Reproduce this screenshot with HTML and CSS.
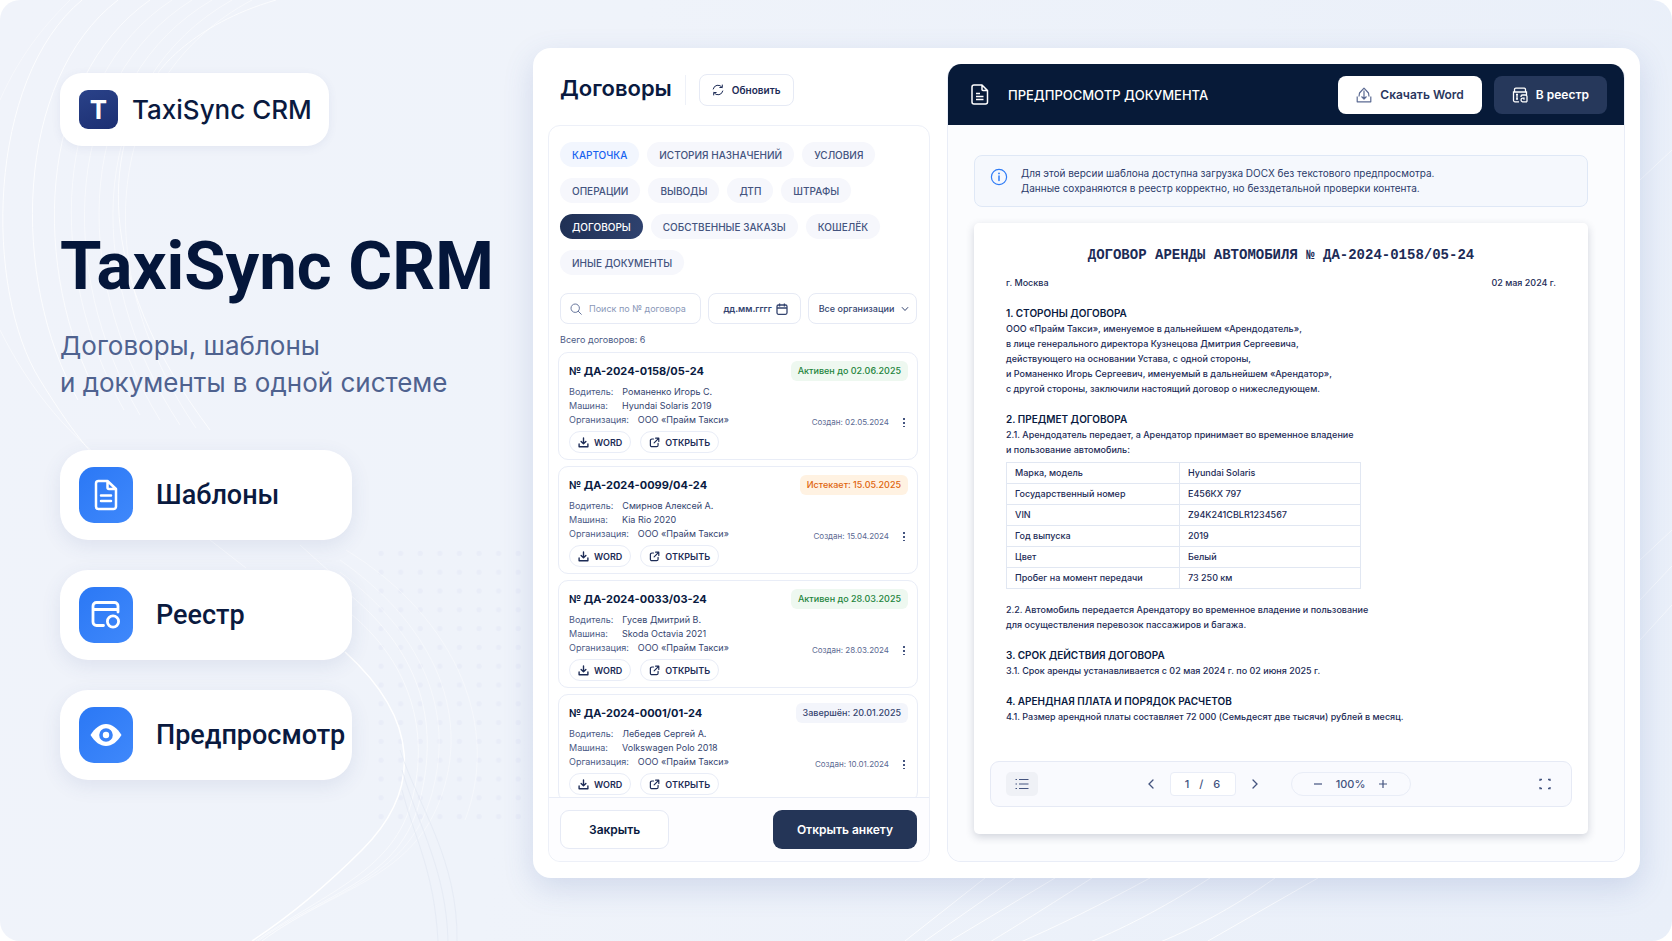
FILE: index.html
```
<!DOCTYPE html>
<html lang="ru">
<head>
    <meta charset="UTF-8">
    <meta name="viewport" content="width=device-width, initial-scale=1.0">
    <title>TaxiSync CRM</title>
    <link rel="stylesheet" href="styles.css">
</head>
<body>
    <!-- Иконки -->
    <svg class="sprite" aria-hidden="true">
        <symbol id="i-download" viewBox="0 0 12 12">
            <path d="M6 1v6M3.4 4.8 6 7.3l2.6-2.5M1.2 7.5V10.6h9.6V7.5" fill="none" stroke="currentColor" stroke-width="1.5" stroke-linecap="round" stroke-linejoin="round"/>
        </symbol>
        <symbol id="i-open" viewBox="0 0 12 12">
            <path d="M5 2.2H3.2a1.7 1.7 0 0 0-1.7 1.7v5a1.7 1.7 0 0 0 1.7 1.7h5A1.7 1.7 0 0 0 9.9 8.9V7M7.2 1.3h3.5v3.5M10.5 1.5 5.6 6.4" fill="none" stroke="currentColor" stroke-width="1.3" stroke-linecap="round" stroke-linejoin="round"/>
        </symbol>
    </svg>

    <div class="page">
        <svg class="backdrop" viewBox="0 0 1672 941" preserveAspectRatio="none" aria-hidden="true">
            <defs>
                <pattern id="dots" x="371" y="544" width="19.6" height="18.8" patternUnits="userSpaceOnUse">
                    <circle cx="10" cy="9.4" r="2.6" fill="#e8ecf7"/>
                </pattern>
            </defs>
            <rect x="371" y="544" width="160" height="282" fill="url(#dots)" opacity=".8"/>
            <g fill="none" stroke="#fff">
                <path d="M82 0C-14 80-16 290 40 380S110 470 150 500" opacity=".8"/>
                <path d="M0 100C22 50 50 20 70 0" opacity=".4"/>
                <path d="M118 0C14 80 10 280 78 400" opacity=".8"/>
                <path d="M150 0C36 80 30 270 100 400" opacity=".7"/>
                <path d="M172 0C50 80 45 270 124 410" opacity=".5"/>
                <path d="M192 0C64 80 55 270 140 415" opacity=".5"/>
                <path d="M212 0C76 80 68 270 160 420" opacity=".5"/>
                <path d="M232 0C90 80 78 270 180 425" opacity=".5"/>
                <path d="M252 0C102 80 88 270 196 428" opacity=".5"/>
                <path d="M276 0C190 25 158 73 158 73C105 140 90 270 210 430" opacity=".7"/>
                <path d="M0 330C30 390 70 440 130 480" opacity=".5"/>
                <path d="M345 652C420 720 422 790 362 850C324 888 290 916 252 941" stroke-width="1.5"/>
                <path d="M340 560C440 630 470 720 440 800S330 890 262 941" opacity=".4"/>
                <path d="M340 572C430 640 455 720 430 800S330 890 262 941" opacity=".4"/>
                <path d="M344 590C420 650 440 720 420 800S330 890 258 941" opacity=".5"/>
                <path d="M346 610C410 660 430 730 412 800S330 890 256 941" opacity=".5"/>
                <path d="M346 550C460 620 500 730 465 820" opacity=".4"/>
                <path d="M210 540 246 568M300 545 350 590" opacity=".5"/>
                <path d="M985 878 905 941M1015 878 925 941M1055 878 950 941M1092 878C1050 905 1010 930 985 945M1150 878C1100 905 1060 925 1014 945M1210 878C1160 910 1120 930 1083 945M1275 878C1230 910 1190 930 1153 945M1318 878 1208 941" opacity=".8"/>
                <path d="M1640 180 1672 150M1640 560 1672 530M1640 600 1672 566M1640 640 1672 605" opacity=".5"/>
            </g>
            <g fill="none" stroke="#e3e9f4" opacity=".7">
                <path d="M400 750C420 810 458 860 457 941"/>
                <path d="M402 770C420 830 446 870 448 941"/>
                <path d="M402 790C415 840 434 870 438 941"/>
            </g>
        </svg>

        <section class="hero">
            <div class="brand">
                <span class="brand-mark">T</span>
                <span class="brand-name">TaxiSync CRM</span>
            </div>
            <h1>TaxiSync CRM</h1>
            <p class="lead">Договоры, шаблоны<br>и документы в одной системе</p>
            <ul class="features">
                <li class="feature">
                    <span class="feature-icon">
                        <svg viewBox="0 0 32 32" width="32" height="32"><path d="M8.500 2h9L26 10v17.500a2.500 2.500 0 0 1-2.500 2.500h-15A2.500 2.500 0 0 1 6 27.500v-23A2.500 2.500 0 0 1 8.500 2M17.500 2v6.500A1.500 1.500 0 0 0 19 10h7M11 16.500h10M11 22h10" fill="none" stroke="#fff" stroke-width="2.5" stroke-linecap="round" stroke-linejoin="round"/></svg>
                    </span>
                    Шаблоны
                </li>
                <li class="feature">
                    <span class="feature-icon">
                        <svg viewBox="0 0 32 32" width="32" height="32"><path d="M13.500 26.500H6.500a3.500 3.500 0 0 1-3.500-3.500V7a3.500 3.500 0 0 1 3.500-3.500h18A3.500 3.500 0 0 1 28 7v6M3 10.500h25" fill="none" stroke="#fff" stroke-width="2.8" stroke-linecap="round"/><circle cx="23" cy="22.5" r="5.6" fill="none" stroke="#fff" stroke-width="2.8"/></svg>
                    </span>
                    Реестр
                </li>
                <li class="feature">
                    <span class="feature-icon">
                        <svg viewBox="0 0 32 32" width="32" height="32"><path d="M.5 16C5 9 10 5 16 5s11 4 15.500 11C27 23 22 27 16 27S5 23 .5 16Z" fill="#fff"/><circle cx="16" cy="16" r="5" fill="#fff" stroke="#3a82f8" stroke-width="3.6"/></svg>
                    </span>
                    Предпросмотр
                </li>
            </ul>
        </section>

        <main class="app">
            <section class="contracts">
                <header class="contracts-head">
                    <h2>Договоры</h2>
                    <button type="button" class="btn-refresh">
                        <svg viewBox="0 0 12 12" width="12" height="12"><path d="M1.2 5A4.900 4.900 0 0 1 10 3.300M10.800 7A4.900 4.900 0 0 1 2 8.700M10.300 1v2.500H7.800M1.700 11V8.500h2.500" fill="none" stroke="currentColor" stroke-linecap="round" stroke-linejoin="round"/></svg>
                        Обновить
                    </button>
                </header>

                <div class="card-panel">
                    <nav class="tabs">
                        <button type="button" class="tab tab-blue">КАРТОЧКА</button>
                        <button type="button" class="tab">ИСТОРИЯ НАЗНАЧЕНИЙ</button>
                        <button type="button" class="tab">УСЛОВИЯ</button>
                        <button type="button" class="tab">ОПЕРАЦИИ</button>
                        <button type="button" class="tab">ВЫВОДЫ</button>
                        <button type="button" class="tab">ДТП</button>
                        <button type="button" class="tab">ШТРАФЫ</button>
                        <button type="button" class="tab tab-active">ДОГОВОРЫ</button>
                        <button type="button" class="tab">СОБСТВЕННЫЕ ЗАКАЗЫ</button>
                        <button type="button" class="tab">КОШЕЛЁК</button>
                        <button type="button" class="tab">ИНЫЕ ДОКУМЕНТЫ</button>
                    </nav>

                    <form class="filters">
                        <label class="field field-search">
                            <svg viewBox="0 0 12 12" width="12" height="12"><circle cx="5.2" cy="5.2" r="4.2" fill="none" stroke="currentColor"/><path d="m8.300 8.300 3 3" stroke="currentColor" stroke-linecap="round"/></svg>
                            <input type="text" placeholder="Поиск по № договора" aria-label="Поиск по № договора">
                        </label>
                        <label class="field field-date">
                            <input type="text" placeholder="дд.мм.гггг" aria-label="Дата">
                            <svg viewBox="0 0 12 12" width="12" height="12"><rect x="1" y="2" width="10" height="9.3" rx="1.5" fill="none" stroke="currentColor" stroke-width="1.3"/><path d="M1 5h10M3.600.6v2.800M8.400.6v2.800" stroke="currentColor" stroke-width="1.3"/></svg>
                        </label>
                        <label class="field field-select">
                            <select aria-label="Организация">
                                <option>Все организации</option>
                            </select>
                            <svg viewBox="0 0 8 8" width="8" height="8"><path d="m1.200 2.500 2.800 3 2.800-3" fill="none" stroke="currentColor" stroke-linecap="round"/></svg>
                        </label>
                    </form>

                    <p class="total">Всего договоров: 6</p>

                    <div class="contract-list">
                        <article class="contract">
                            <div class="contract-top">
                                <h3>№ ДА-2024-0158/05-24</h3>
                                <span class="badge badge-green">Активен до 02.06.2025</span>
                            </div>
                            <div class="contract-info">
                                <dl>
                                    <div><dt>Водитель:</dt><dd>Романенко Игорь С.</dd></div>
                                    <div><dt>Машина:</dt><dd>Hyundai Solaris 2019</dd></div>
                                    <div><dt>Организация:</dt><dd>ООО «Прайм Такси»</dd></div>
                                </dl>
                                <span class="created">Создан: 02.05.2024</span>
                                <button type="button" class="more" aria-label="Ещё"></button>
                            </div>
                            <div class="contract-actions">
                                <button type="button" class="chip"><svg width="11" height="11"><use href="#i-download"/></svg>WORD</button>
                                <button type="button" class="chip"><svg width="11" height="11"><use href="#i-open"/></svg>ОТКРЫТЬ</button>
                            </div>
                        </article>

                        <article class="contract">
                            <div class="contract-top">
                                <h3>№ ДА-2024-0099/04-24</h3>
                                <span class="badge badge-orange">Истекает: 15.05.2025</span>
                            </div>
                            <div class="contract-info">
                                <dl>
                                    <div><dt>Водитель:</dt><dd>Смирнов Алексей А.</dd></div>
                                    <div><dt>Машина:</dt><dd>Kia Rio 2020</dd></div>
                                    <div><dt>Организация:</dt><dd>ООО «Прайм Такси»</dd></div>
                                </dl>
                                <span class="created">Создан: 15.04.2024</span>
                                <button type="button" class="more" aria-label="Ещё"></button>
                            </div>
                            <div class="contract-actions">
                                <button type="button" class="chip"><svg width="11" height="11"><use href="#i-download"/></svg>WORD</button>
                                <button type="button" class="chip"><svg width="11" height="11"><use href="#i-open"/></svg>ОТКРЫТЬ</button>
                            </div>
                        </article>

                        <article class="contract">
                            <div class="contract-top">
                                <h3>№ ДА-2024-0033/03-24</h3>
                                <span class="badge badge-green">Активен до 28.03.2025</span>
                            </div>
                            <div class="contract-info">
                                <dl>
                                    <div><dt>Водитель:</dt><dd>Гусев Дмитрий В.</dd></div>
                                    <div><dt>Машина:</dt><dd>Skoda Octavia 2021</dd></div>
                                    <div><dt>Организация:</dt><dd>ООО «Прайм Такси»</dd></div>
                                </dl>
                                <span class="created">Создан: 28.03.2024</span>
                                <button type="button" class="more" aria-label="Ещё"></button>
                            </div>
                            <div class="contract-actions">
                                <button type="button" class="chip"><svg width="11" height="11"><use href="#i-download"/></svg>WORD</button>
                                <button type="button" class="chip"><svg width="11" height="11"><use href="#i-open"/></svg>ОТКРЫТЬ</button>
                            </div>
                        </article>

                        <article class="contract">
                            <div class="contract-top">
                                <h3>№ ДА-2024-0001/01-24</h3>
                                <span class="badge badge-gray">Завершён: 20.01.2025</span>
                            </div>
                            <div class="contract-info">
                                <dl>
                                    <div><dt>Водитель:</dt><dd>Лебедев Сергей А.</dd></div>
                                    <div><dt>Машина:</dt><dd>Volkswagen Polo 2018</dd></div>
                                    <div><dt>Организация:</dt><dd>ООО «Прайм Такси»</dd></div>
                                </dl>
                                <span class="created">Создан: 10.01.2024</span>
                                <button type="button" class="more" aria-label="Ещё"></button>
                            </div>
                            <div class="contract-actions">
                                <button type="button" class="chip"><svg width="11" height="11"><use href="#i-download"/></svg>WORD</button>
                                <button type="button" class="chip"><svg width="11" height="11"><use href="#i-open"/></svg>ОТКРЫТЬ</button>
                            </div>
                        </article>
                    </div>

                    <footer class="card-footer">
                        <button type="button" class="btn btn-light">Закрыть</button>
                        <button type="button" class="btn btn-dark">Открыть анкету</button>
                    </footer>
                </div>
            </section>

            <section class="preview">
                <header class="preview-head">
                    <svg viewBox="0 0 18 21" width="18" height="21"><path d="M3 1h8l5.500 5.500V18a2 2 0 0 1-2 2H3a2 2 0 0 1-2-2V3a2 2 0 0 1 2-2ZM11 1v4.500a1 1 0 0 0 1 1h4.500" fill="none" stroke="#fff" stroke-width="1.5" stroke-linejoin="round"/><path d="M5 9.500h4M5 12.500h7.500M5 15.500h7.500" stroke="#fff" stroke-width="1.6"/></svg>
                    <h2>ПРЕДПРОСМОТР ДОКУМЕНТА</h2>
                    <button type="button" class="head-btn head-btn-white">
                        <svg viewBox="0 0 16 16" width="16" height="16"><path d="M1.200 9.500v5.300h13.600V9.500M8 12V3.500M5.500 9.500 8 12l2.500-2.500M3 9.500 3.500 6 8 1.200 12.500 6l.5 3.500" fill="none" stroke="#5b6a92" stroke-width="1.2" stroke-linejoin="round"/></svg>
                        Скачать Word
                    </button>
                    <button type="button" class="head-btn head-btn-dark">
                        <svg viewBox="0 0 16 16" width="16" height="16"><path d="M7 14.800H3a1.500 1.500 0 0 1-1.500-1.500V5h13v3M2.500 5V2.500A1.300 1.300 0 0 1 3.800 1.200h8.400a1.300 1.300 0 0 1 1.300 1.300V5M5 7.500v4.500M4 7.500h2M4 12h2" fill="none" stroke="#fff" stroke-width="1.3"/><path d="M15 14.800V9.500A1.500 1.500 0 0 0 13.500 8h-3A1.500 1.500 0 0 0 9 9.500v.5M15 14.800h-4.500A1.800 1.800 0 0 1 9 13c0-1 .8-1.800 1.800-1.800H12v1.600" fill="none" stroke="#fff" stroke-width="1.3"/></svg>
                        В реестр
                    </button>
                </header>

                <div class="preview-body">
                    <div class="notice">
                        <svg viewBox="0 0 18 18" width="18" height="18"><circle cx="9" cy="9" r="7.6" fill="none" stroke="#2f7cf6" stroke-width="1.2"/><path d="M9 8v4.500" stroke="#2f7cf6" stroke-width="1.5" stroke-linecap="round"/><circle cx="9" cy="5.4" r=".9" fill="#2f7cf6"/></svg>
                        <p>Для этой версии шаблона доступна загрузка DOCX без текстового предпросмотра.<br>Данные сохраняются в реестр корректно, но безздетальной проверки контента.</p>
                    </div>

                    <article class="doc">
                        <h3 class="doc-title">ДОГОВОР АРЕНДЫ АВТОМОБИЛЯ № ДА-2024-0158/05-24</h3>
                        <div class="doc-meta">
                            <span>г. Москва</span>
                            <span>02 мая 2024 г.</span>
                        </div>

                        <section>
                            <h4>1. СТОРОНЫ ДОГОВОРА</h4>
                            <p>ООО «Прайм Такси», именуемое в дальнейшем «Арендодатель»,<br>в лице генерального директора Кузнецова Дмитрия Сергеевича,<br>действующего на основании Устава, с одной стороны,<br>и Романенко Игорь Сергеевич, именуемый в дальнейшем «Арендатор»,<br>с другой стороны, заключили настоящий договор о нижеследующем.</p>
                        </section>

                        <section>
                            <h4>2. ПРЕДМЕТ ДОГОВОРА</h4>
                            <p>2.1. Арендодатель передает, а Арендатор принимает во временное владение<br>и пользование автомобиль:</p>
                            <table>
                                <tr><td>Марка, модель</td><td>Hyundai Solaris</td></tr>
                                <tr><td>Государственный номер</td><td>Е456КХ 797</td></tr>
                                <tr><td>VIN</td><td>Z94K241CBLR1234567</td></tr>
                                <tr><td>Год выпуска</td><td>2019</td></tr>
                                <tr><td>Цвет</td><td>Белый</td></tr>
                                <tr><td>Пробег на момент передачи</td><td>73 250 км</td></tr>
                            </table>
                            <p>2.2. Автомобиль передается Арендатору во временное владение и пользование<br>для осуществления перевозок пассажиров и багажа.</p>
                        </section>

                        <section>
                            <h4>3. СРОК ДЕЙСТВИЯ ДОГОВОРА</h4>
                            <p>3.1. Срок аренды устанавливается с 02 мая 2024 г. по 02 июня 2025 г.</p>
                        </section>

                        <section>
                            <h4>4. АРЕНДНАЯ ПЛАТА И ПОРЯДОК РАСЧЕТОВ</h4>
                            <p>4.1. Размер арендной платы составляет 72 000 (Семьдесят две тысячи) рублей в месяц.</p>
                        </section>

                        <div class="toolbar">
                            <button type="button" class="tool-list" aria-label="Содержание">
                                <svg viewBox="0 0 14 12" width="14" height="12"><path d="M4 1.500h9.500M4 6h9.500M4 10.500h9.500M.5 1.500H2M.5 6H2M.5 10.500H2" stroke="currentColor" stroke-width="1.2"/></svg>
                            </button>
                            <div class="toolbar-center">
                                <div class="pager">
                                    <button type="button" aria-label="Назад"><svg viewBox="0 0 8 10" width="8" height="10"><path d="M6 1 2 5l4 4" fill="none" stroke="currentColor" stroke-width="1.3" stroke-linecap="round"/></svg></button>
                                    <span class="page-box"><span>1</span><span>/</span><span>6</span></span>
                                    <button type="button" aria-label="Вперёд"><svg viewBox="0 0 8 10" width="8" height="10"><path d="m2 1 4 4-4 4" fill="none" stroke="currentColor" stroke-width="1.3" stroke-linecap="round"/></svg></button>
                                </div>
                                <div class="zoom">
                                    <button type="button" aria-label="Уменьшить"><svg viewBox="0 0 8 8" width="8" height="8"><path d="M0 4h8" stroke="currentColor" stroke-width="1.2"/></svg></button>
                                    <span>100%</span>
                                    <button type="button" aria-label="Увеличить"><svg viewBox="0 0 8 8" width="8" height="8"><path d="M0 4h8M4 0v8" stroke="currentColor" stroke-width="1.2"/></svg></button>
                                </div>
                            </div>
                            <button type="button" class="tool-full" aria-label="На весь экран">
                                <svg viewBox="0 0 12 12" width="12" height="12"><path d="M1 3V1.500h2M9 1.500h2V3M1 9v1.500h2M9 10.500h2V9" fill="none" stroke="currentColor" stroke-width="1.3"/></svg>
                            </button>
                        </div>
                    </article>
                </div>
            </section>
        </main>
    </div>
</body>
</html>
```
FILE: styles.css
```
* {
    margin: 0;
    padding: 0;
    box-sizing: border-box;
}

body {
    font-family: Inter, "Liberation Sans", sans-serif;
    color: #0a1a3f;
    background: white;
}

button, input, select {
    font: inherit;
    color: inherit;
    border: none;
    background: none;
}

button {
    cursor: pointer;
    white-space: nowrap;
}

svg {
    display: block;
    flex: none;
}

.sprite {
    position: absolute;
    width: 0;
    height: 0;
}

.page {
    position: relative;
    overflow: hidden;
    display: flex;
    min-height: 100vh;
    padding: 48px 32px 63px 60px;
    border-radius: 20px;
    background: linear-gradient(100deg, #f0f3fa 0%, #eff3fa 35%, #e9eff9 100%);
}

.backdrop {
    position: absolute;
    inset: 0;
    width: 100%;
    height: 100%;
}

/* Левая колонка */
.hero {
    position: relative;
    flex: 0 0 473px;
    padding-top: 25px;
}

.brand {
    display: inline-flex;
    align-items: center;
    gap: 14px;
    height: 73px;
    padding: 0 17px 0 19px;
    border-radius: 22px;
    background: #fff;
    box-shadow: 0 2px 10px rgba(60, 80, 140, 0.08);
}

.brand-mark {
    display: flex;
    align-items: center;
    justify-content: center;
    width: 39px;
    height: 39px;
    border-radius: 9px;
    background: linear-gradient(160deg, #2a4289, #1c2f72);
    color: #fff;
    font-size: 26px;
    font-weight: 700;
}

.brand-name {
    font-size: 26px;
    font-weight: 500;
}

h1 {
    margin-top: 78px;
    font-family: Roboto, sans-serif;
    font-size: 67px;
    line-height: 84px;
    font-weight: 700;
    color: #04163a;
    white-space: nowrap;
}

.lead {
    margin-top: 19px;
    font-size: 26px;
    line-height: 37px;
    color: #4f628f;
    white-space: nowrap;
}

.features {
    margin-top: 49px;
    width: 292px;
    list-style: none;
}

.feature {
    display: flex;
    align-items: center;
    gap: 23px;
    height: 90px;
    margin-bottom: 30px;
    padding: 0 19px;
    border-radius: 28px;
    background: #fff;
    box-shadow: 0 6px 20px rgba(60, 80, 140, 0.1);
    font-family: Roboto, sans-serif;
    font-size: 27px;
    font-weight: 500;
    white-space: nowrap;
}

.feature-icon {
    display: flex;
    flex: none;
    align-items: center;
    justify-content: center;
    width: 54px;
    height: 56px;
    border-radius: 15px;
    background: linear-gradient(135deg, #2b78f5, #3f88fb);
}

/* Окно приложения */
.app {
    position: relative;
    flex: 1;
    display: flex;
    gap: 17px;
    min-width: 0;
    padding: 16px 15px;
    border-radius: 18px;
    background: #fff;
    box-shadow: 0 10px 30px rgba(70, 100, 170, 0.18);
}

.contracts {
    flex: 0 0 382px;
    display: flex;
    flex-direction: column;
}

.contracts-head {
    display: flex;
    align-items: center;
    height: 52px;
    margin-bottom: 9px;
    padding: 0 12px;
}

.contracts-head h2 {
    font-size: 22px;
    font-weight: 600;
    margin-right: 13px;
}

.btn-refresh {
    display: flex;
    align-items: center;
    gap: 8px;
    height: 32px;
    padding: 0 12px;
    border: 1px solid #e6eaf5;
    border-radius: 8px;
    font-size: 10px;
    font-weight: 600;
    color: #1c2b56;
}

.contracts-head h2::after {
    content: "";
    display: inline-block;
    width: 1px;
    height: 30px;
    margin-left: 13px;
    background: #eef1f8;
    vertical-align: middle;
}

.card-panel {
    flex: 1;
    display: flex;
    flex-direction: column;
    border: 1px solid #edf0f8;
    border-radius: 12px;
}

.tabs {
    display: flex;
    flex-wrap: wrap;
    gap: 11px 8px;
    padding: 16px 11px 0;
}

.tab {
    height: 25px;
    padding: 0 12px;
    border-radius: 13px;
    background: #f6f7fc;
    color: #44547f;
    font-size: 10px;
    font-weight: 500;
}

.tab-blue {
    background: #f2f6fe;
    color: #1662f0;
}

.tab-active {
    background: linear-gradient(100deg, #1f3054, #2f426f);
    color: #fff;
}

.filters {
    display: grid;
    grid-template-columns: 141fr 92fr 109fr;
    gap: 7px;
    padding: 18px 12px 0 11px;
}

.field {
    display: flex;
    align-items: center;
    min-width: 0;
    height: 31px;
    border: 1px solid #e6eaf5;
    border-radius: 8px;
    font-size: 9px;
    color: #34446f;
}

.field input, .field select {
    flex: 1;
    min-width: 0;
    width: 100%;
    outline: none;
    appearance: none;
}

.field-search {
    gap: 7px;
    padding: 0 8px 0 9px;
    color: #66759c;
}

.field-search input::placeholder {
    color: #8a97b8;
}

.field-date {
    padding: 0 12px 0 14px;
    font-weight: 600;
}

.field-date input::placeholder {
    color: #34446f;
}

.field-select {
    padding: 0 7px 0 10px;
    font-weight: 500;
}

.total {
    padding: 9px 11px 6px;
    font-size: 9px;
    line-height: 13px;
    color: #4b5a85;
}

.contract-list {
    flex: 1 1 0;
    min-height: 0;
    overflow: hidden;
    padding: 0 11px 0 9px;
}

.contract {
    height: 108px;
    margin-bottom: 6px;
    padding: 8px 9px 0 10px;
    border: 1px solid #e9edf7;
    border-radius: 10px;
}

.contract-top {
    display: flex;
    align-items: center;
    justify-content: space-between;
    height: 20px;
}

.contract-top h3 {
    font-size: 11px;
    font-weight: 700;
}

.badge {
    padding: 0 7px;
    border-radius: 6px;
    font-size: 9px;
    line-height: 20px;
    font-weight: 500;
}

.badge-green {
    background: #eef8f0;
    color: #23843c;
}

.badge-orange {
    background: #fff2e2;
    color: #e0650f;
}

.badge-gray {
    background: #f3f5fb;
    color: #34446f;
}

.contract-info {
    display: flex;
    align-items: flex-end;
    margin-top: 4px;
    font-size: 9px;
    line-height: 14px;
    color: #34446f;
}

.contract-info dl {
    flex: 1;
}

.contract-info dl div {
    display: flex;
    gap: 9px;
}

.contract-info dt {
    min-width: 44px;
    color: #4b5a85;
}

.created {
    color: #5b6992;
    font-size: 8px;
    line-height: 10px;
}

.more {
    width: 2px;
    height: 10px;
    margin: 0 3px 0 14px;
    background: radial-gradient(circle, #44547f 1px, transparent 1px) 0 0 / 2px 4px;
}

.contract-actions {
    display: flex;
    gap: 9px;
    margin-top: 4px;
}

.chip {
    display: flex;
    align-items: center;
    gap: 5px;
    height: 22px;
    padding: 0 8px;
    border: 1px solid #e9edf7;
    border-radius: 11px;
    font-size: 9px;
    font-weight: 600;
    color: #1c2b56;
}

.card-footer {
    display: flex;
    align-items: center;
    justify-content: space-between;
    height: 64px;
    padding: 0 12px 0 11px;
    border-top: 1px solid #e9edf7;
    background: #fdfdff;
    border-radius: 0 0 12px 12px;
}

.btn {
    height: 39px;
    border-radius: 9px;
    font-size: 12px;
    font-weight: 600;
}

.btn-light {
    padding: 0 28px;
    border: 1px solid #e6eaf5;
    background: #fff;
}

.btn-dark {
    padding: 0 24px;
    background: #243557;
    color: #fff;
}

/* Предпросмотр */
.preview {
    flex: 1;
    display: flex;
    flex-direction: column;
    min-width: 0;
    border-radius: 14px;
    border: 1px solid #e9edf7;
    border-top: none;
    overflow: hidden;
}

.preview-head {
    display: flex;
    align-items: center;
    height: 61px;
    padding: 0 17px 0 23px;
    background: #071a38;
    color: #fff;
}

.preview-head h2 {
    flex: 1;
    margin-left: 19px;
    font-size: 13px;
    font-weight: 500;
    white-space: nowrap;
}

.head-btn {
    display: flex;
    align-items: center;
    gap: 8px;
    height: 38px;
    margin-left: 12px;
    padding: 0 18px;
    border-radius: 8px;
    font-size: 12px;
    font-weight: 600;
}

.head-btn-white {
    background: #fff;
    color: #2b3860;
}

.head-btn-dark {
    background: #26385b;
    color: #fff;
}

.preview-body {
    flex: 1;
    padding: 30px 36px 26px 26px;
    background: #fbfcfe;
}

.notice {
    display: flex;
    gap: 13px;
    padding: 10px 15px;
    border: 1px solid #dfe8f6;
    border-radius: 8px;
    background: #f5f8fd;
    font-size: 10px;
    line-height: 15px;
    color: #2b3b6b;
}

.notice svg {
    margin-top: 2px;
}

.doc {
    margin-top: 16px;
    padding: 24px 16px 27px;
    border-radius: 5px;
    background: #fff;
    box-shadow: 0 3px 8px rgba(40, 50, 80, 0.2);
    font-size: 9px;
    line-height: 15px;
    font-weight: 500;
    color: #1c2b56;
}

.doc-title {
    font-family: "Liberation Mono", monospace;
    font-size: 14px;
    line-height: 16px;
    font-weight: 700;
    text-align: center;
}

.doc-meta {
    display: flex;
    justify-content: space-between;
    margin: 12px 16px 15px;
}

.doc section {
    margin: 0 16px 15px;
}

.doc h4 {
    font-size: 10px;
    font-weight: 600;
    line-height: 16px;
    color: #0a1a3f;
}

.doc table {
    width: 355px;
    margin: 5px 0 13px;
    border-collapse: collapse;
}

.doc td {
    height: 21px;
    padding: 0 8px;
    border: 1px solid #e1e7f2;
    line-height: 20px;
}

.doc td:first-child {
    width: 173px;
}

.toolbar {
    display: grid;
    grid-template-columns: 1fr auto 1fr;
    align-items: center;
    height: 46px;
    margin-top: 37px;
    padding: 0 20px 0 15px;
    border: 1px solid #e6eaf5;
    border-radius: 9px;
    background: #f9fafe;
    font-size: 11px;
    color: #44547f;
}

.tool-list {
    display: flex;
    align-items: center;
    justify-content: center;
    width: 32px;
    height: 24px;
    border-radius: 5px;
    background: #eff1f6;
}

.tool-full {
    justify-self: end;
}

.toolbar-center {
    display: flex;
    align-items: center;
    gap: 32px;
}

.pager {
    display: flex;
    align-items: center;
    gap: 15px;
}

.page-box {
    display: flex;
    justify-content: center;
    gap: 10px;
    width: 66px;
    border: 1px solid #e9edf7;
    border-radius: 4px;
    background: #fff;
    line-height: 22px;
}

.zoom {
    display: flex;
    align-items: center;
    justify-content: center;
    gap: 14px;
    width: 120px;
    height: 24px;
    border: 1px solid #e9edf7;
    border-radius: 12px;
}
```
